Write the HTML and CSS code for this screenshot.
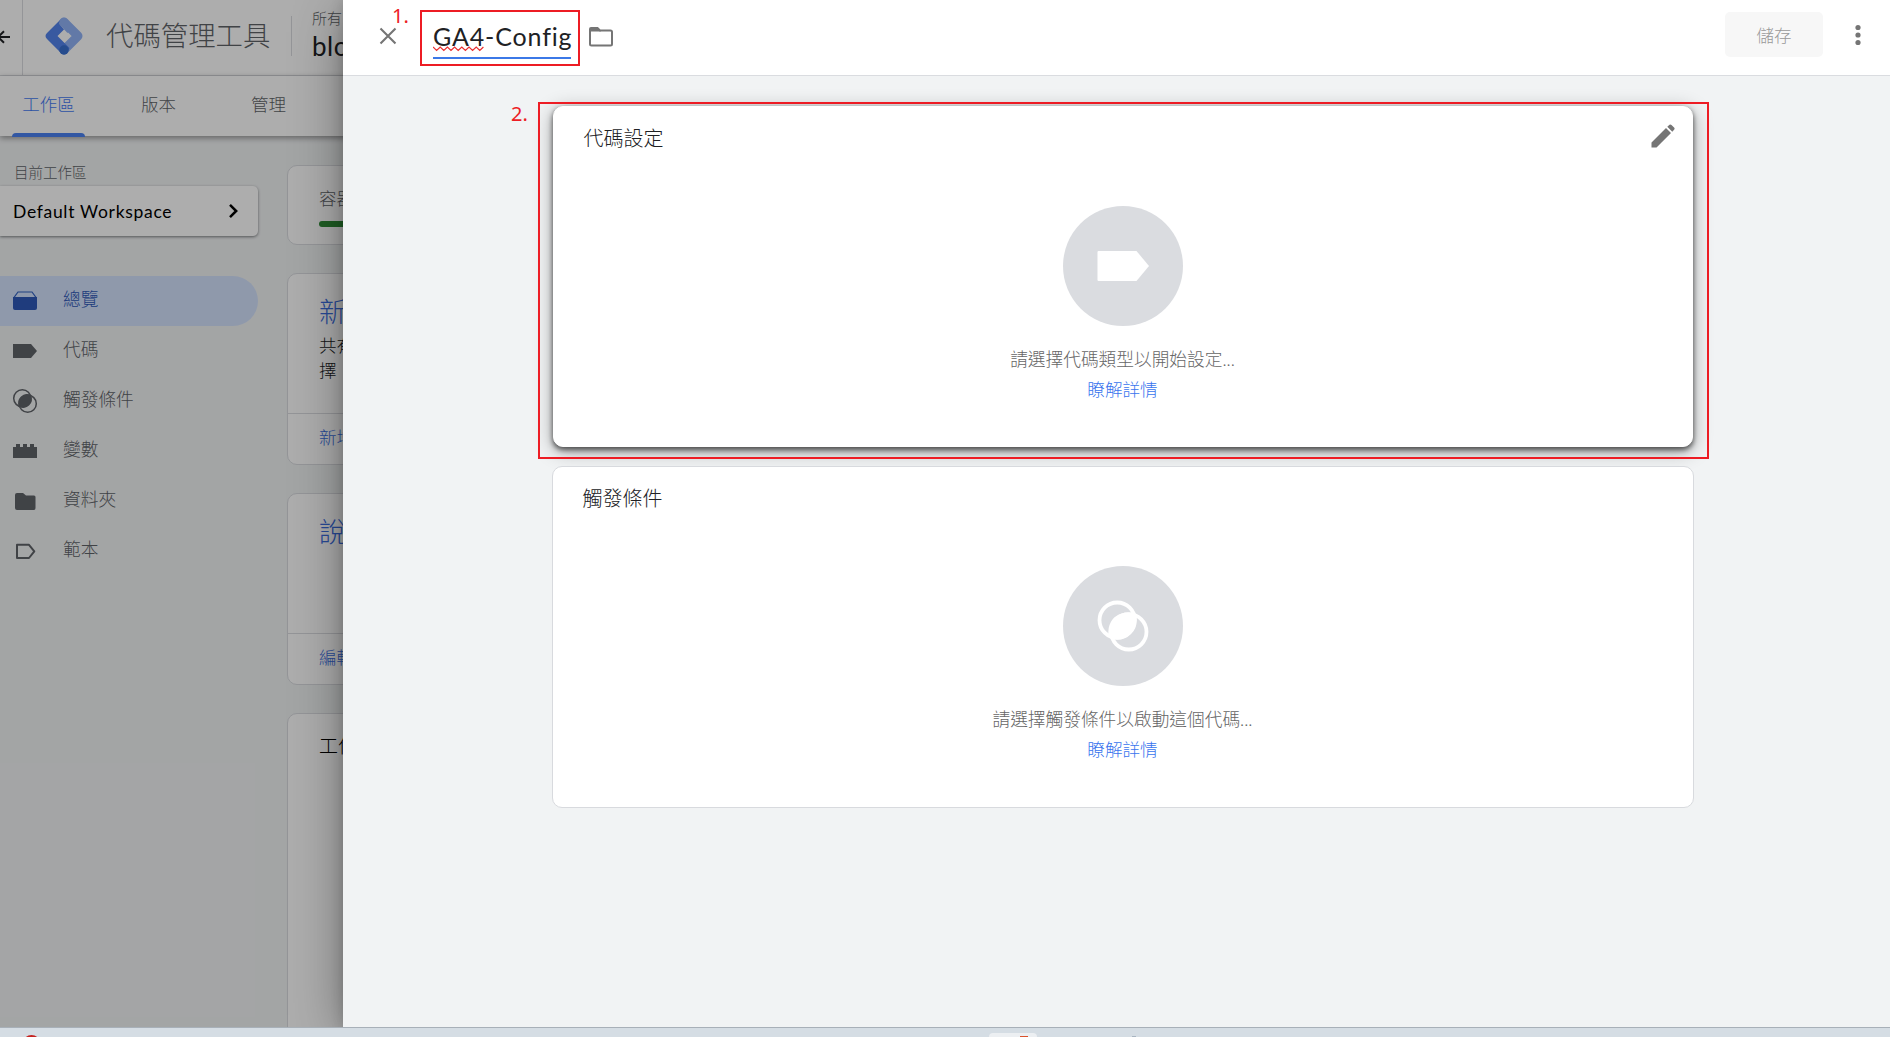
FILE: index.html
```html
<!DOCTYPE html>
<html lang="zh-Hant">
<head>
<meta charset="utf-8">
<title>代碼管理工具</title>
<link rel="stylesheet" href="styles.css">
</head>
<body>
<div class="browser">
  <div class="app">
    <header class="app-header">
      <div class="back"><svg width="22" height="20" viewBox="0 0 22 20"><path d="M-4 10.5H10M-2 10.5L4 4.8M-2 10.5L4 16.2" transform="translate(0 .5)" fill="none" stroke="#202124" stroke-width="2"/></svg></div>
      <svg class="logo" width="38" height="38" viewBox="0 0 38 38">
        <path d="M19 5L33 19L19 33" fill="none" stroke="#91b3f6" stroke-width="9" stroke-linejoin="round" stroke-linecap="round"/>
        <path d="M15.5 2.5L2 16Q-1 19 2 22L15.5 35.5Q19 38 22.5 35.5L24.5 31L12.5 19L19 12.5L14.5 7Z" fill="#5383ec"/>
        <circle cx="19" cy="5.5" r="4.7" fill="#91b3f6"/><path d="M15.5 8.5L19 5L26 12L22.5 16Z" fill="#91b3f6"/>
        <circle cx="19" cy="33" r="4.7" fill="#3870d0"/>
      </svg>
      <h1 class="product">代碼管理工具</h1>
      <div class="account"><span class="account-scope">所有</span><span class="account-name">blo</span></div>
    </header>
    <nav class="tabs"><a class="tab tab-active">工作區</a><a class="tab">版本</a><a class="tab">管理</a></nav>
    <div class="workspace">
      <aside class="sidebar">
        <div class="current-label">目前工作區</div>
        <div class="current"><span>Default Workspace</span><svg width="12" height="16" viewBox="0 0 12 16"><path d="M2 1.8L8.2 8L2 14.2" fill="none" stroke="#000" stroke-width="2.5"/></svg></div>
        <ul class="menu">
          <li class="item item-active"><svg width="26" height="26" viewBox="0 0 26 26"><path d="M6 4H20L24 9.5H2Z" fill="none" stroke="#3060c0" stroke-width="1.2"/><path d="M1 9H25V20Q25 22 23 22H3Q1 22 1 20Z" fill="#2f59b8"/></svg><span>總覽</span></li>
          <li class="item"><svg width="26" height="26" viewBox="0 0 26 26"><path d="M1 6H19L25 13L19 20H1Z" fill="#5f6368"/></svg><span>代碼</span></li>
          <li class="item"><svg width="26" height="26" viewBox="0 0 26 26"><g fill="none" stroke="#5f6368" stroke-width="1.5"><circle cx="10.3" cy="10.3" r="8.6"/><circle cx="15.7" cy="15.7" r="8.6"/></g><path d="M7.2 18.8A8.6 8.6 0 0 1 18.8 7.2A8.6 8.6 0 0 1 7.2 18.8Z" fill="#5f6368"/></svg><span>觸發條件</span></li>
          <li class="item"><svg width="26" height="26" viewBox="0 0 26 26"><path d="M1 9H4V6H8V9H11V6H15V9H18V6H22V9H25V20H1Z" fill="#5f6368"/></svg><span>變數</span></li>
          <li class="item"><svg width="26" height="26" viewBox="0 0 26 26"><path d="M5 5H11L14 7.5H22Q23.5 7.5 23.5 9V20Q23.5 22 22 22H5Q3 22 3 20V7Q3 5 5 5Z" fill="#5f6368"/></svg><span>資料夾</span></li>
          <li class="item"><svg width="26" height="26" viewBox="0 0 26 26"><path d="M5 6.8H17L22.3 13.3L17 20H5Z" fill="none" stroke="#5f6368" stroke-width="2" stroke-linejoin="round"/></svg><span>範本</span></li>
        </ul>
      </aside>
      <main class="overview">
        <section class="tile quota"><span>容器</span><div class="meter"></div></section>
        <section class="tile"><div class="tile-body"><h2>新增</h2><p>共有</p><p>擇</p></div><div class="tile-action">新增</div></section>
        <section class="tile"><div class="tile-body"><h2>說明</h2></div><div class="tile-action">編輯</div></section>
        <section class="tile changes">工作</section>
      </main>
    </div>
  </div>
  <div class="scrim"></div>

  <div class="sheet">
    <header class="sheet-header">
      <svg class="close" width="18" height="18" viewBox="0 0 18 18"><path d="M1.5 1.5L16.5 16.5M16.5 1.5L1.5 16.5" stroke="#757575" stroke-width="2.1"/></svg>
      <div class="tag-name"><span class="name-text">GA4-Config</span><svg class="squiggle" width="52" height="6" viewBox="0 0 52 6"><path d="M0 1L3.600 4.500L7.200 1L10.800 4.500L14.400 1L18 4.500L21.600 1L25.200 4.500L28.800 1L32.400 4.500L36 1L39.600 4.500L43.200 1L46.800 4.500L50.400 1" fill="none" stroke="#ea2f2f" stroke-width="1.200"/></svg></div>
      <svg class="folder" width="26" height="22" viewBox="0 0 26 22"><path d="M3 2H9.5L12 4.5H22.5Q24 4.5 24 6V18Q24 19.5 22.5 19.5H3.5Q2 19.5 2 18V3Q2 2 3 2Z" fill="none" stroke="#757575" stroke-width="2"/><path d="M2 2H10L13 5.5H2Z" fill="#757575"/></svg>
      <button class="save" type="button">儲存</button>
      <svg class="more" width="6" height="22" viewBox="0 0 6 22" fill="#757575"><circle cx="3" cy="3.5" r="2.6"/><circle cx="3" cy="11" r="2.6"/><circle cx="3" cy="18.5" r="2.6"/></svg>
    </header>
    <div class="sheet-body">
      <section class="card card-raised">
        <div class="card-head"><h3>代碼設定</h3><svg width="26" height="26" viewBox="0 0 26 26"><path d="M1.5 24.5V19.5L16 5L21 10L6.500 24.500ZM17.300 3.700L19.500 1.800Q20.500 1 21.500 2L24.300 4.700Q25 5.500 24.300 6.500L22.300 8.700Z" fill="#757575"/></svg></div>
        <div class="disc"><svg width="52" height="32" viewBox="0 0 52 32"><path d="M1.500 1H39.500L52 16L39.500 31H1.500Q.5 31 .5 30V2Q.5 1 1.500 1Z" fill="#fff"/></svg></div>
        <p class="hint">請選擇代碼類型以開始設定...</p>
        <a class="learn">瞭解詳情</a>
      </section>
      <section class="card">
        <div class="card-head"><h3>觸發條件</h3></div>
        <div class="disc"><svg width="52" height="52" viewBox="0 0 52 52"><g fill="none" stroke="#fff" stroke-width="3.800"><circle cx="20.200" cy="20.200" r="17.700"/><circle cx="31.800" cy="31.800" r="17.700"/></g><path d="M12.500 38A19.500 19.500 0 0 1 12.500 25Q17 13 31 12.500Q38 13 39.500 14.500Q41 27 33 34.500Q24 42 14 38.500Z" fill="#fff"/></svg></div>
        <p class="hint">請選擇觸發條件以啟動這個代碼...</p>
        <a class="learn">瞭解詳情</a>
      </section>
    </div>
  </div>

  <div class="mark mark-name"></div><span class="step step-one">1.</span>
  <div class="mark mark-card"></div><span class="step step-two">2.</span>
</div>
<footer class="taskbar"><svg width="1890" height="9" viewBox="0 0 1890 9"><circle cx="31.500" cy="16" r="9" fill="#c5221f"/><rect x="989" y="5" width="48" height="20" rx="4" fill="#eceff2"/><rect x="1020" y="8" width="8" height="4" fill="#d9512c"/><rect x="1132" y="8" width="4" height="2" fill="#a9b5c1"/></svg></footer>
</body>
</html>
```
FILE: styles.css
```css
* { box-sizing: border-box; }
body {
  margin: 0; width: 1890px; height: 1037px; overflow: hidden;
  font-family: Lato, "Noto Sans CJK TC", sans-serif;
  font-weight: 300; font-size: 17.5px; color: #202124;
}
h1, h2, h3, p, ul { margin: 0; padding: 0; font-weight: 300; }
svg { display: block; flex: none; }
.browser { position: relative; height: 1027px; overflow: hidden; background: #f1f3f4; }

/* Page behind the sheet */
.app { width: 600px; height: 1027px; display: flex; flex-direction: column; isolation: isolate; }
.app-header { height: 76px; display: flex; align-items: flex-start; background: #fff; border-bottom: 1px solid #dadce0; flex: none; }
.back { width: 23px; height: 75px; padding-top: 26px; border-right: 1px solid #dadce0; }
.logo { margin: 17px 23px 0 22px; }
.product { width: 186px; height: 40px; margin-top: 16px; font-size: 27.4px; line-height: 39px; color: #5f6368; border-right: 1px solid #dadce0; white-space: nowrap; }
.account { display: flex; flex-direction: column; margin-left: 20px; padding-top: 8px; }
.account-scope { font-size: 15px; line-height: 20px; color: #5f6368; }
.account-name { font-size: 26px; line-height: 37px; font-weight: 400; letter-spacing: .5px; }
.tabs { position: relative; z-index: 1; height: 60px; flex: none; display: flex; gap: 38px; padding-left: 12px; background: #fff; box-shadow: 0 2px 6px rgba(0,0,0,.4); }
.tab { position: relative; width: 73px; margin-right: -1px; text-align: center; line-height: 58px; color: #5f6368; }
.tab-active { color: #4379f2; }
.tab-active::after { content: ""; position: absolute; left: 0; right: 0; bottom: -1px; height: 4px; background: #4a80f0; border-radius: 4px 4px 0 0; }
.workspace { flex: 1; min-height: 0; display: flex; background: #f1f3f4; }
.sidebar { width: 287px; padding-top: 24px; }
.current-label { padding-left: 14px; height: 26px; line-height: 25px; font-size: 14.5px; color: #5f6368; }
.current { width: 258px; height: 50px; display: flex; align-items: center; justify-content: space-between; padding: 0 18px 0 13px; background: #fff; border-radius: 0 5px 5px 0; box-shadow: 0 1px 3px rgba(60,64,67,.65); font-weight: 400; color: #000; letter-spacing: .7px; white-space: nowrap; }
.menu { list-style: none; margin-top: 40px; }
.item { width: 258px; height: 50px; display: flex; align-items: center; gap: 25px; padding-left: 12px; color: #5f6368; border-radius: 0 25px 25px 0; }
.item span { line-height: 48px; padding-bottom: 2px; font-size: 17.7px; }
.item-active { background: #d3e2fd; color: #2f59b8; }
.overview { width: 313px; padding-top: 29px; display: flex; flex-direction: column; gap: 28px; }
.tile { height: 192px; flex: none; display: flex; flex-direction: column; background: #fff; border: 1px solid #dadce0; border-radius: 10px; }
.quota { height: 80px; padding: 19px 31px 0; line-height: 28px; color: #5f6368; }
.meter { height: 6px; flex: none; margin-top: 8px; background: #2e8b36; border-radius: 3px; }
.tile-body { height: 140px; padding: 17px 31px 0; border-bottom: 1px solid #dadce0; line-height: 25px; }
.tile-body h2 { font-size: 27px; line-height: 42px; color: #3c6ee0; }
.tile-action { padding-left: 31px; line-height: 48px; color: #3c6ee0; }
.changes { height: 400px; padding: 17px 31px; font-size: 19px; line-height: 30px; color: #000; }
.scrim { position: absolute; inset: 0; background: rgba(0,0,0,.32); }

/* Tag editor sheet */
.sheet { position: absolute; left: 343px; top: 0; right: 0; bottom: 0; background: #f1f3f4; box-shadow: 0 10px 50px -4px rgba(0,0,0,.45), 0 0 12px rgba(0,0,0,.15); }
.sheet-header { height: 76px; display: flex; align-items: center; background: #fff; border-bottom: 1px solid #dadce0; padding: 0 29px 0 36px; }
.close { margin-top: -3px; }
.tag-name { position: relative; width: 138px; height: 45px; margin: 14px 17px 0 36px; align-self: flex-start; border-bottom: 2px solid #3b78e7; }
.name-text { display: block; font-size: 25px; line-height: 45px; font-weight: 400; letter-spacing: .85px; white-space: nowrap; }
.squiggle { position: absolute; left: 0; top: 32px; }
.folder { margin-top: -2px; }
.save { margin: -7px 32px 0 auto; width: 98px; height: 45px; border: 0; border-radius: 5px; background: #f7f7f7; color: #999; font: 300 17.5px/45px "Noto Sans CJK TC", sans-serif; padding: 0 0 2px; }
.more { margin-top: -6px; }
.sheet-body { display: flex; flex-direction: column; align-items: center; gap: 19px; padding: 30px 0 0 12px; }
.card { width: 1142px; height: 342px; display: flex; flex-direction: column; align-items: center; background: #fff; border: 1px solid #d8dade; border-radius: 10px; }
.card-raised { width: 1140px; height: 341px; border-color: #fff; box-shadow: 0 3px 6px rgba(0,0,0,.45), 0 4px 20px rgba(0,0,0,.32), 0 2px 4px rgba(0,0,0,.3); }
.card-head { width: 100%; height: 99px; display: flex; justify-content: space-between; align-items: flex-start; padding: 17px 16px 0 30px; }
.card-head svg { margin-top: -1px; }
.card-head h3 { font-size: 20px; line-height: 28px; }
.disc { width: 120px; height: 120px; display: grid; place-items: center; flex: none; border-radius: 50%; background: #dadce0; }
.hint { margin-top: 19px; line-height: 30px; font-size: 17.7px; color: #666; }
.learn { line-height: 30px; font-size: 17.6px; color: #3874ee; }

/* Tutorial callouts */
.mark { position: absolute; border: 2px solid #ed1c24; }
.mark-name { left: 420px; top: 10px; width: 160px; height: 56px; }
.mark-card { left: 538px; top: 102px; width: 1171px; height: 357px; }
.step { position: absolute; font: 400 20px/24px "Noto Sans", sans-serif; color: #ed1c24; }
.step-one { left: 392px; top: 4px; }
.step-two { left: 511px; top: 102px; }
.taskbar { height: 10px; background: #d5dde4; border-top: 1px solid #a8b0b8; }
```
